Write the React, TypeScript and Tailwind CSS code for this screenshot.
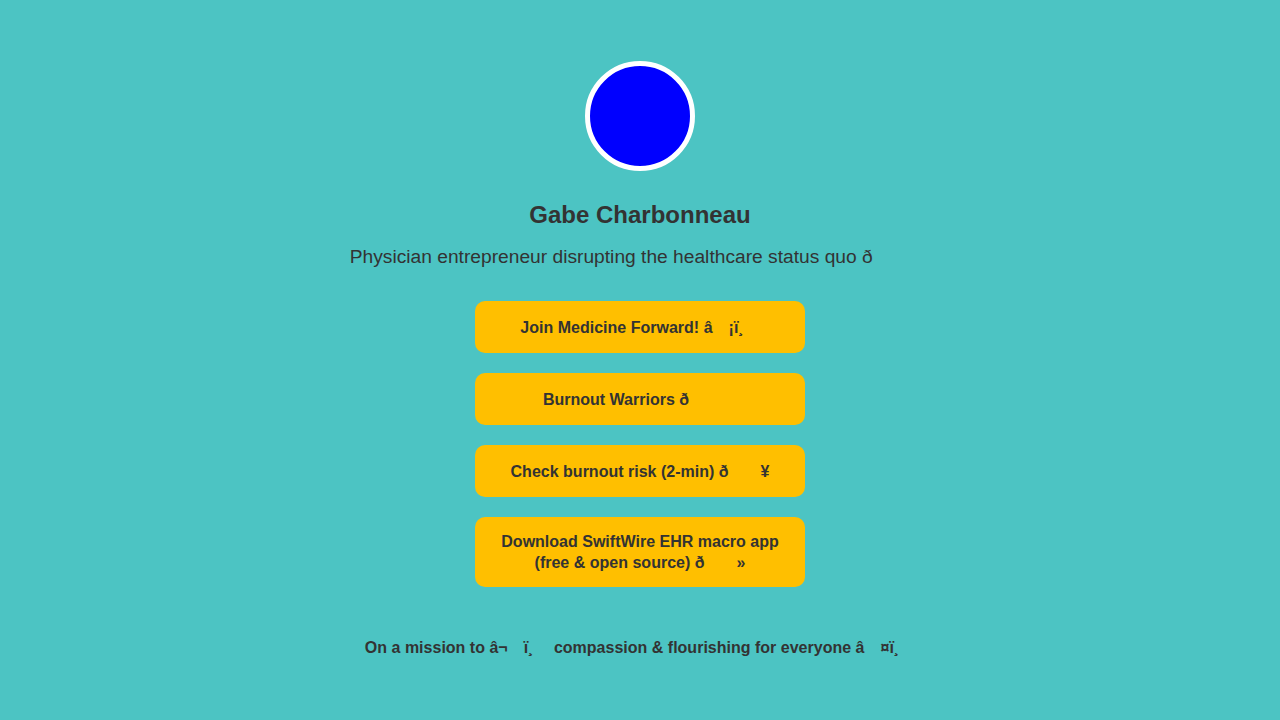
import { Fragment } from "react";

const links = [
  "Join Medicine Forward! \u00e2\u009a\u00a1\u00ef\u00b8\u008f",
  "Burnout Warriors \u00f0\u009f\u0092\u0080",
  "Check burnout risk (2-min) \u00f0\u009f\u0094\u00a5",
  "Download SwiftWire EHR macro app (free & open source) \u00f0\u009f\u0092\u00bb",
];

// the mangled emoji carry C1 control characters; give each one an em of blank room
function Garbled({ text }: { text: string }) {
  return (
    <>
      {Array.from(text).map((ch, i) => {
        const code = ch.charCodeAt(0);
        if (code >= 0x80 && code <= 0x9f) {
          return <span key={i} className="inline-block w-[1em] text-transparent">{ch}</span>;
        }
        return <Fragment key={i}>{ch}</Fragment>;
      })}
    </>
  );
}

export default function App() {
  return (
    <div className="min-h-[720px] bg-[#4cc4c3] font-['Liberation_Sans',Arial,sans-serif] text-[#333333]">
      <div className="mx-auto flex max-w-[700px] flex-col items-center pt-[61px] text-center">
        <div className="h-[110px] w-[110px] rounded-full border-[5px] border-white bg-[#0000ff]" />
        <h1 className="mt-[29px] text-[24px] font-bold leading-[30px]">Gabe Charbonneau</h1>
        <p className="mt-[15px] whitespace-nowrap text-[19.2px] leading-[24px]">
          <Garbled text={"Physician entrepreneur disrupting the healthcare status quo \u00f0\u009f\u009a\u0080"} />
        </p>
        <div className="mt-[32px] flex w-[330px] flex-col gap-[20px]">
          {links.map((label) => (
            <a
              key={label}
              href="#"
              className="flex min-h-[52px] items-center justify-center rounded-[10px] bg-[#ffbf00] px-[20px] py-[14px] text-[16px] font-bold leading-[21px] text-[#333333]"
            >
              <span>
                <Garbled text={label} />
              </span>
            </a>
          ))}
        </div>
        <p className="mt-[51px] whitespace-nowrap text-[16px] font-bold leading-[20px]">
          <Garbled text={"On a mission to \u00e2\u00ac\u0086\u00ef\u00b8\u008f compassion & flourishing for everyone \u00e2\u009d\u00a4\u00ef\u00b8\u008f"} />
        </p>
      </div>
    </div>
  );
}
